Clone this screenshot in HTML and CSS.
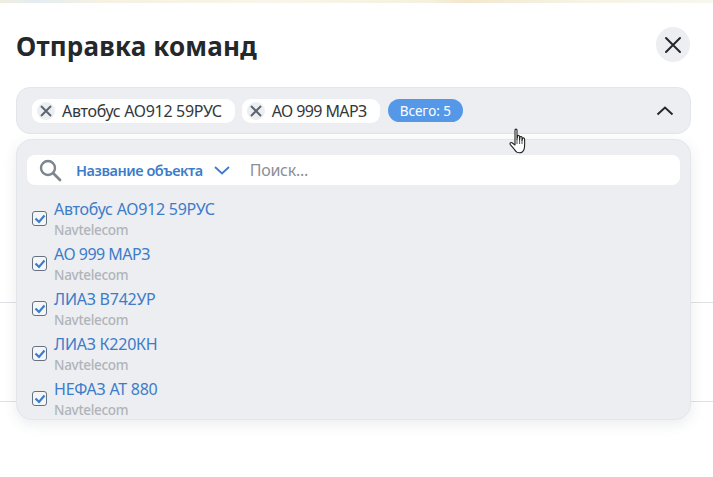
FILE: index.html
```html
<!DOCTYPE html>
<html lang="ru">
<head>
<meta charset="utf-8">
<title>Отправка команд</title>
<link rel="stylesheet" href="styles.css">
</head>
<body>
<div class="map-strip"></div>
<main class="modal">
  <header class="modal-head">
    <h1 class="title">Отправка команд</h1>
    <button class="close" aria-label="Закрыть">
      <svg width="18" height="18" viewBox="0 0 18 18"><path d="M2 2L16 16M16 2L2 16" stroke="#25282b" stroke-width="2" stroke-linecap="round"/></svg>
    </button>
  </header>
  <div class="field">
    <div class="select">
      <span class="chip">
        <span class="chip-x"><svg width="12" height="12" viewBox="0 0 12 12"><path d="M1 1L11 11M11 1L1 11" stroke="#5c6670" stroke-width="2"/></svg></span>
        <span class="chip-text">Автобус АО912 59РУС</span>
      </span>
      <span class="chip chip-tight">
        <span class="chip-x"><svg width="12" height="12" viewBox="0 0 12 12"><path d="M1 1L11 11M11 1L1 11" stroke="#5c6670" stroke-width="2"/></svg></span>
        <span class="chip-text">АО 999 МАРЗ</span>
      </span>
      <span class="total">Всего: 5</span>
      <svg class="caret" width="18" height="10" viewBox="0 0 18 10"><path d="M1.5 8.5L9 1.5L16.5 8.5" fill="none" stroke="#25282b" stroke-width="2"/></svg>
    </div>
    <div class="dropdown">
      <div class="search">
        <svg class="search-icon" width="24" height="24" viewBox="0 0 24 24"><circle cx="10" cy="10" r="7" fill="none" stroke="#7d868e" stroke-width="2.4"/><path d="M15.5 15.5L22 22" stroke="#7d868e" stroke-width="2.8" stroke-linecap="round"/></svg>
        <span class="filter">Название объекта</span>
        <svg class="filter-caret" width="16" height="9" viewBox="0 0 16 9"><path d="M1 1L8 7.5L15 1" fill="none" stroke="#3d7cc9" stroke-width="1.8"/></svg>
        <span class="placeholder">Поиск...</span>
      </div>
      <ul class="list">
        <li class="item">
          <span class="check"><svg width="12" height="10" viewBox="0 0 12 10"><path d="M1.5 4.5L5 8L10.5 1.5" fill="none" stroke="#3d7cc9" stroke-width="2.2"/></svg></span>
          <div class="item-text"><div class="name">Автобус АО912 59РУС</div><div class="vendor">Navtelecom</div></div>
        </li>
        <li class="item">
          <span class="check"><svg width="12" height="10" viewBox="0 0 12 10"><path d="M1.5 4.5L5 8L10.5 1.5" fill="none" stroke="#3d7cc9" stroke-width="2.2"/></svg></span>
          <div class="item-text"><div class="name name-tight">АО 999 МАРЗ</div><div class="vendor">Navtelecom</div></div>
        </li>
        <li class="item">
          <span class="check"><svg width="12" height="10" viewBox="0 0 12 10"><path d="M1.5 4.5L5 8L10.5 1.5" fill="none" stroke="#3d7cc9" stroke-width="2.2"/></svg></span>
          <div class="item-text"><div class="name">ЛИАЗ В742УР</div><div class="vendor">Navtelecom</div></div>
        </li>
        <li class="item">
          <span class="check"><svg width="12" height="10" viewBox="0 0 12 10"><path d="M1.5 4.5L5 8L10.5 1.5" fill="none" stroke="#3d7cc9" stroke-width="2.2"/></svg></span>
          <div class="item-text"><div class="name">ЛИАЗ К220КН</div><div class="vendor">Navtelecom</div></div>
        </li>
        <li class="item">
          <span class="check"><svg width="12" height="10" viewBox="0 0 12 10"><path d="M1.5 4.5L5 8L10.5 1.5" fill="none" stroke="#3d7cc9" stroke-width="2.2"/></svg></span>
          <div class="item-text"><div class="name">НЕФАЗ АТ 880</div><div class="vendor">Navtelecom</div></div>
        </li>
      </ul>
    </div>
  </div>
  <div class="divider first"></div>
  <div class="divider second"></div>
</main>
<svg class="cursor" width="20" height="27" viewBox="0 0 20 27"><path d="M6 2.2C6 .8 8 .8 8 2.2V11.5L8.6 8.2C8.8 7 10.6 7.2 10.6 8.6V12L11 9.2C11.3 8 13 8.3 13 9.6V12.5L13.5 10.6C13.8 9.5 15.6 9.8 15.6 11.2C15.6 15 16 19 15 21.5C14.2 23.6 12.8 24.8 10.5 24.8C8 24.8 6.6 23.5 5.2 21.2L1.3 16.6C.4 15.4 1.8 14 3 14.8L6 17Z" fill="#fff" stroke="#222" stroke-width="1.1" stroke-linejoin="round"/><path d="M8 11.5V16M10.6 12V16M13 12.5V16" stroke="#222" stroke-width=".8"/></svg>
</body>
</html>
```
FILE: styles.css
```css
* { box-sizing: border-box; }
html, body { margin: 0; padding: 0; }
body {
  position: relative;
  width: 713px;
  height: 477px;
  overflow: hidden;
  background: #fff;
  font-family: "Noto Sans", "Open Sans", sans-serif;
  color: #25282b;
}
.map-strip {
  height: 3px;
  background: linear-gradient(90deg, #f1eee0 0, #e3edf3 5%, #f5f2e2 14%, #f8f6ea 40%, #f4f1de 60%, #f3e7cc 65%, #f4f3e4 80%, #f8f7ee 100%);
}
.modal { position: relative; padding: 0 22px 0 16px; }
.modal-head {
  display: flex;
  align-items: center;
  justify-content: space-between;
  height: 84px;
  padding-bottom: 1px;
}
.title {
  margin: 2px 0 0;
  font-size: 26px;
  line-height: 36px;
  font-weight: 700;
  letter-spacing: .2px;
  color: #25282b;
}
.close {
  display: flex;
  align-items: center;
  justify-content: center;
  width: 34px;
  height: 35px;
  margin-right: 1px;
  padding: 0;
  border: 0;
  border-radius: 50%;
  background: #eceef2;
}
.field { position: relative; z-index: 1; }
.select {
  display: flex;
  align-items: center;
  gap: 7px;
  height: 47px;
  padding: 0 16px 0 15px;
  border: 1px solid #e3e6ea;
  border-radius: 14px;
  background: #eceef2;
}
.chip {
  display: flex;
  align-items: center;
  height: 24px;
  padding: 0 13px 0 5px;
  border-radius: 9px;
  background: #fff;
  font-size: 16px;
  letter-spacing: -.3px;
  color: #33373b;
}
.chip-tight { letter-spacing: -.6px; }
.chip-x {
  display: flex;
  align-items: center;
  justify-content: center;
  width: 18px;
  height: 18px;
  margin-right: 7px;
  border-radius: 50%;
  background: #eceef2;
}
.total {
  display: flex;
  align-items: center;
  height: 23px;
  margin-left: 1px;
  padding: 0 12px;
  border-radius: 12px;
  background: #5598e8;
  color: #fff;
  font-size: 13.5px;
}
.caret { margin-left: auto; margin-right: 0; }
.dropdown {
  height: 281px;
  margin-top: 5px;
  padding: 15px 10px 0;
  overflow: hidden;
  border: 1px solid #e3e6ea;
  border-radius: 16px;
  background: #eceef2;
  box-shadow: 0 4px 14px rgba(60, 70, 90, .1);
}
.search {
  display: flex;
  align-items: center;
  height: 30px;
  padding-left: 11px;
  border-radius: 8px;
  background: #fff;
}
.search-icon { flex: none; }
.filter {
  margin-left: 14px;
  font-size: 14.5px;
  font-weight: 600;
  letter-spacing: -.45px;
  color: #3d7cc9;
}
.filter-caret { margin-left: 11px; }
.placeholder {
  margin-left: 20px;
  font-size: 16px;
  letter-spacing: -.25px;
  color: #8b9096;
}
.list { margin: 11px 0 0; padding: 0 0 0 5px; list-style: none; }
.item { display: flex; align-items: center; height: 45px; }
.check {
  display: flex;
  align-items: center;
  justify-content: center;
  flex: none;
  width: 15px;
  height: 15px;
  border: 1.2px solid #66727f;
  border-radius: 3px;
  background: #f4f6f9;
}
.item-text { margin-left: 7px; }
.name {
  font-size: 16px;
  line-height: 23px;
  letter-spacing: -.25px;
  color: #3d7cc9;
}
.name-tight { letter-spacing: -.5px; }
.vendor {
  font-size: 13.5px;
  line-height: 18px;
  font-weight: 500;
  letter-spacing: -.3px;
  color: #b0b4b9;
}
.divider.first, .divider.second { position: absolute; left: 0; right: 0; height: 1px; background: #dfe1e4; }
.divider.first { top: 299px; }
.divider.second { top: 398px; }
.cursor { position: absolute; left: 509px; top: 128px; z-index: 2; }
```
